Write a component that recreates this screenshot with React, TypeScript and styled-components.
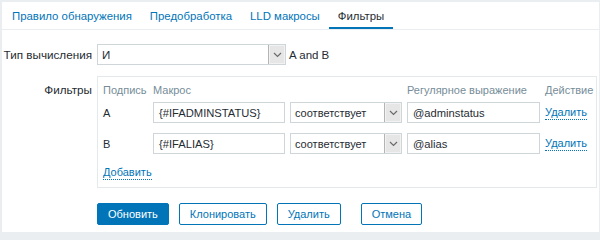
import React from "react";
import styled, { createGlobalStyle } from "styled-components";

const GlobalStyle = createGlobalStyle`
  html, body {
    margin: 0;
    background: #ebeef0;
  }
  body {
    font-family: "Liberation Sans", Arial, sans-serif;
    font-size: 11px;
    color: #1f2c33;
  }
`;

const Page = styled.div`
  margin: 2px 1px 0 2px;
  height: 230px;
  background: #ffffff;
  box-sizing: border-box;
`;

const TabBar = styled.div`
  display: flex;
  height: 28px;
  border-bottom: 1px solid #ebeef0;
  box-sizing: border-box;
  padding-left: 1px;
`;

const Tab = styled.div<{ $active?: boolean }>`
  display: flex;
  align-items: center;
  padding: 2px 9px 0;
  height: 27px;
  box-sizing: border-box;
  font-size: 11.4px;
  border-bottom: 2px solid ${(p) => (p.$active ? "#0275b8" : "transparent")};
  color: ${(p) => (p.$active ? "#1f2c33" : "#0275b8")};
`;

const Form = styled.div`
  display: grid;
  grid-template-columns: 95px auto;
  row-gap: 11px;
  padding-top: 14px;
`;

const Label = styled.div<{ $top?: boolean }>`
  text-align: right;
  padding-right: 5px;
  font-size: 11.7px;
  align-self: ${(p) => (p.$top ? "start" : "center")};
  padding-top: ${(p) => (p.$top ? "7px" : "0")};
  line-height: 14px;
  white-space: nowrap;
`;

const Field = styled.div`
  display: flex;
  align-items: center;
  gap: 3px;
  font-size: 11.5px;
`;

const SelectBox = styled.div<{ $w: number }>`
  display: flex;
  align-items: center;
  width: ${(p) => p.$w}px;
  height: 21px;
  border: 1px solid #cfd6da;
  box-sizing: border-box;
  background: #fff;
`;

const SelectValue = styled.div`
  flex: 1;
  padding-left: 4px;
  white-space: nowrap;
  overflow: hidden;
`;

const SelectButton = styled.div`
  width: 16px;
  height: 19px;
  display: flex;
  align-items: center;
  justify-content: center;
  background: #e6e6e6;
  border-left: 1px solid #b4b4b4;
  box-shadow: inset 0 0 0 1px #f2f2f2;
`;

const FilterBox = styled.div`
  width: 500px;
  border: 1px solid #e4e9eb;
  padding: 4px 0 6px 5px;
  box-sizing: border-box;
`;

const TableRow = styled.div<{ $head?: boolean }>`
  display: grid;
  grid-template-columns: 45px 132px 112px 133px auto;
  column-gap: 5px;
  align-items: center;
  height: ${(p) => (p.$head ? "18px" : "21px")};
  padding: ${(p) => (p.$head ? "0" : "3px 0 7px")};
`;

const HeadCell = styled.div`
  color: #768d99;
  white-space: nowrap;
`;

const TextInput = styled.div`
  height: 21px;
  border: 1px solid #cfd6da;
  box-sizing: border-box;
  padding: 0 5px;
  display: flex;
  align-items: center;
  background: #fff;
  font-size: 11.2px;
`;

const DottedLink = styled.span`
  color: #0275b8;
  border-bottom: 1px dotted #0275b8;
  line-height: 14px;
  justify-self: start;
`;

const AddRow = styled.div`
  padding: 2px 0 0;
  height: 18px;
  display: flex;
  align-items: center;
`;

const Buttons = styled.div`
  display: flex;
  gap: 10px;
  margin-top: 4px;
`;

const Button = styled.div<{ $primary?: boolean; $gapLeft?: number }>`
  height: 22px;
  padding: 0 10px;
  display: flex;
  align-items: center;
  box-sizing: border-box;
  font-size: 11px;
  border: 1px solid #0275b8;
  border-radius: 2px;
  background: ${(p) => (p.$primary ? "#0275b8" : "#ffffff")};
  color: ${(p) => (p.$primary ? "#ffffff" : "#0275b8")};
  margin-left: ${(p) => p.$gapLeft ?? 0}px;
`;

const Chevron = () => (
  <svg width="9" height="6" viewBox="0 0 9 6">
    <path d="M1 1 L4.5 4.5 L8 1" fill="none" stroke="#6b6b6b" strokeWidth="1.2" />
  </svg>
);

const Select = ({ value, width }: { value: string; width: number }) => (
  <SelectBox $w={width}>
    <SelectValue>{value}</SelectValue>
    <SelectButton>
      <Chevron />
    </SelectButton>
  </SelectBox>
);

const filters = [
  { name: "A", macro: "{#IFADMINSTATUS}", value: "@adminstatus" },
  { name: "B", macro: "{#IFALIAS}", value: "@alias" },
];

export default function App() {
  return (
    <>
      <GlobalStyle />
      <Page>
        <TabBar>
          <Tab>Правило обнаружения</Tab>
          <Tab>Предобработка</Tab>
          <Tab>LLD макросы</Tab>
          <Tab $active>Фильтры</Tab>
        </TabBar>
        <Form>
          <Label>Тип вычисления</Label>
          <Field>
            <Select value="И" width={189} />
            <span>A and B</span>
          </Field>

          <Label $top>Фильтры</Label>
          <FilterBox>
            <TableRow $head>
              <HeadCell>Подпись</HeadCell>
              <HeadCell>Макрос</HeadCell>
              <HeadCell />
              <HeadCell>Регулярное выражение</HeadCell>
              <HeadCell>Действие</HeadCell>
            </TableRow>
            {filters.map((f) => (
              <TableRow key={f.name}>
                <div>{f.name}</div>
                <TextInput>{f.macro}</TextInput>
                <Select value="соответствует" width={112} />
                <TextInput>{f.value}</TextInput>
                <DottedLink>Удалить</DottedLink>
              </TableRow>
            ))}
            <AddRow>
              <DottedLink>Добавить</DottedLink>
            </AddRow>
          </FilterBox>

          <div />
          <Buttons>
            <Button $primary>Обновить</Button>
            <Button>Клонировать</Button>
            <Button>Удалить</Button>
            <Button $gapLeft={10}>Отмена</Button>
          </Buttons>
        </Form>
      </Page>
    </>
  );
}
